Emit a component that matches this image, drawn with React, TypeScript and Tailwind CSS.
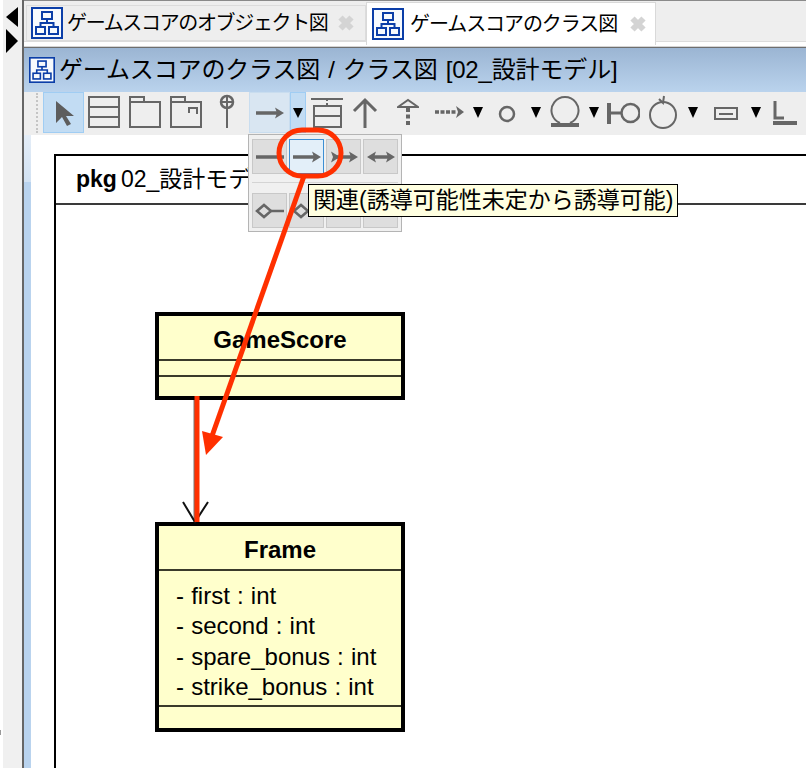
const JP = "font-['Liberation_Sans','Noto_Sans_CJK_JP',sans-serif]";

function DiagramIcon({ size }: { size: number }) {
  return (
    <svg width={size} height={size} viewBox="0 0 32 32" className="shrink-0">
      <rect x="1" y="1" width="30" height="30" fill="#f7fafd" stroke="#0b3ea8" strokeWidth="2" />
      <g fill="none" stroke="#0b3ea8" strokeWidth="2">
        <rect x="11" y="5" width="10" height="7" />
        <rect x="5" y="20" width="9" height="7" />
        <rect x="18" y="20" width="9" height="7" />
        <path d="M16 12v4M9.5 20v-4h13v4" />
      </g>
    </svg>
  );
}

function Tab({ label, active, width }: { label: string; active?: boolean; width: string }) {
  return (
    <div
      className={`flex items-center ${width} ${
        active
          ? "h-[43px] bg-white border border-b-0 border-[#d9d9d9] pl-[5px]"
          : "h-[36px] mt-[3px] bg-[#eeeeee] border border-[#dcdcdc] pl-[4px]"
      }`}
    >
      <DiagramIcon size={32} />
      <span
        className={`text-[20px] leading-none text-black whitespace-nowrap ${JP} ${
          active ? "ml-[6px] tracking-[-1.08px]" : "ml-[4px] tracking-[-1.35px]"
        }`}
      >
        {label}
      </span>
      <svg width="18" height="18" viewBox="0 0 18 18" className={`shrink-0 ${active ? "ml-[12px]" : "ml-[9px]"}`}>
        <path d="M3.5 3.5l11 11M14.5 3.5l-11 11" stroke="#d4d4d4" strokeWidth="6" />
      </svg>
    </div>
  );
}

const S = "#666666";

function TI({ w, ml, children }: { w: number; ml: number; children: React.ReactNode }) {
  return (
    <svg width={w} height="42" viewBox={`0 0 ${w} 42`} className="shrink-0" style={{ marginLeft: ml }}>
      {children}
    </svg>
  );
}

function Drop({ ml }: { ml: number }) {
  return (
    <svg width="12" height="42" viewBox="0 0 12 42" className="shrink-0" style={{ marginLeft: ml }}>
      <path d="M1 15h10l-5 11z" fill="#000" />
    </svg>
  );
}

function Arrow() {
  return (
    <>
      <path d="M1 8h21" stroke={S} strokeWidth="3.5" />
      <path d="M20 2.5l9 5.5-9 5.5 2-5.5z" fill={S} />
    </>
  );
}

function Toolbar() {
  return (
    <div className="flex h-[43px] bg-[#eeeeee] items-start pl-[5px]">
      <div className="w-[2px] h-[40px] mt-[1px] border-l-2 border-dotted border-[#c4c4c4]" />
      <div className="ml-[5px] w-[41px] h-[41px] bg-[#c2dcf3] border border-[#a0cdf3] flex items-center justify-center">
        <svg width="24" height="30" viewBox="0 0 24 30">
          <path d="M4 3v22l6-6 5 9 4-2-5-8h8z" fill="#5d5d5d" />
        </svg>
      </div>
      <TI w={32} ml={4}>
        <rect x="1" y="5" width="30" height="30" fill="none" stroke={S} strokeWidth="2" />
        <path d="M1 15h30M1 25h30" stroke={S} strokeWidth="2" />
      </TI>
      <TI w={32} ml={9}>
        <path d="M1 35V10h30v25zM1 10V5h14v5" fill="none" stroke={S} strokeWidth="2" />
      </TI>
      <TI w={32} ml={9}>
        <path d="M1 35V10h30v25zM1 10V5h14v5M19 21v-5h8v6" fill="none" stroke={S} strokeWidth="2" />
      </TI>
      <TI w={18} ml={16}>
        <circle cx="9" cy="10" r="6" fill="none" stroke={S} strokeWidth="2.5" />
        <path d="M9 4v32M3 10h12" stroke={S} strokeWidth="2" />
      </TI>
      <div className="ml-[13px] w-[41px] h-[41px] bg-[#d9e6f2] border border-[#c9ddef] flex items-center justify-center">
        <svg width="30" height="16" viewBox="0 0 30 16"><Arrow /></svg>
      </div>
      <div className="w-[16px] h-[41px] bg-[#c2dcf3] border border-[#a0cdf3] flex items-center justify-center">
        <svg width="12" height="10" viewBox="0 0 12 10"><path d="M1 0h10L6 10z" fill="#000" /></svg>
      </div>
      <TI w={34} ml={5}>
        <path d="M0 7h32" stroke={S} strokeWidth="2" />
        <path d="M16 7v7" stroke={S} strokeWidth="2" strokeDasharray="2 2" />
        <rect x="3" y="14" width="27" height="21" fill="none" stroke={S} strokeWidth="2" />
        <path d="M3 24h27" stroke={S} strokeWidth="2" />
      </TI>
      <TI w={26} ml={7}>
        <path d="M2 19L13 8l11 11M13 9v27" fill="none" stroke={S} strokeWidth="3" />
      </TI>
      <TI w={22} ml={19}>
        <path d="M1 15L11 8l10 7z" fill="none" stroke={S} strokeWidth="2" />
        <path d="M11 16v19" stroke={S} strokeWidth="4" strokeDasharray="4 2.5" />
      </TI>
      <TI w={30} ml={16}>
        <path d="M0 20h22" stroke={S} strokeWidth="3.5" strokeDasharray="4 1.5" />
        <path d="M21 14l8 6-8 6 2-6z" fill={S} />
      </TI>
      <Drop ml={7} />
      <TI w={18} ml={14}>
        <circle cx="9" cy="22" r="7" fill="none" stroke={S} strokeWidth="2.5" />
      </TI>
      <Drop ml={14} />
      <TI w={30} ml={8}>
        <path d="M10 31a13.5 13.5 0 1 1 10 0" fill="none" stroke={S} strokeWidth="2" />
        <path d="M1 33h28" stroke={S} strokeWidth="4" />
      </TI>
      <Drop ml={8} />
      <TI w={34} ml={6}>
        <path d="M3 11v21" stroke={S} strokeWidth="4" />
        <path d="M3 21h13" stroke={S} strokeWidth="3" />
        <circle cx="24.5" cy="21" r="9" fill="none" stroke={S} strokeWidth="2.5" />
      </TI>
      <TI w={30} ml={8}>
        <circle cx="15" cy="23" r="13" fill="none" stroke={S} strokeWidth="2" />
        <path d="M11 7l4 4 1-7" fill="none" stroke={S} strokeWidth="2" />
      </TI>
      <Drop ml={9} />
      <TI w={24} ml={15}>
        <rect x="1" y="16" width="22" height="11" fill="none" stroke={S} strokeWidth="2" />
        <path d="M5 22h14" stroke={S} strokeWidth="2" />
      </TI>
      <Drop ml={12} />
      <TI w={24} ml={11}>
        <path d="M2 9v17h9" fill="none" stroke={S} strokeWidth="3" />
        <path d="M0 31h24" stroke={S} strokeWidth="4" />
      </TI>
    </div>
  );
}

function PopBtn({ active, children }: { active?: boolean; children: React.ReactNode }) {
  return (
    <div
      className={`w-[35px] h-[35px] border flex items-center justify-center ${
        active ? "bg-[#e3eff9] border-[#3d8fd4]" : "bg-[#dedede] border-[#c8c8c8]"
      }`}
    >
      <svg width="30" height="16" viewBox="0 0 30 16">{children}</svg>
    </div>
  );
}

function Popup() {
  return (
    <div className="absolute left-[248px] top-[134px] w-[154px] h-[98px] bg-[#f0f0f0] border border-[#b4b4b4] px-[3px] pt-[4px]">
      <div className="flex gap-[2px]">
        <PopBtn><path d="M1 8h28" stroke={S} strokeWidth="3.5" /></PopBtn>
        <PopBtn active><Arrow /></PopBtn>
        <PopBtn>
          <path d="M6 8h18" stroke={S} strokeWidth="3.5" />
          <path d="M2 2.5l9 5.5-9 5.5 2-5.5zM20 2.5l9 5.5-9 5.5 2-5.5z" fill={S} />
        </PopBtn>
        <PopBtn>
          <path d="M5 8h20" stroke={S} strokeWidth="3.5" />
          <path d="M10 2.5L1 8l9 5.5-2-5.5zM20 2.5l9 5.5-9 5.5 2-5.5z" fill={S} />
        </PopBtn>
      </div>
      <div className="h-px bg-[#d4d4d4] mt-[8px] mb-[10px]" />
      <div className="flex gap-[2px]">
        <PopBtn>
          <path d="M2 8l7-6 7 6-7 6z" fill="none" stroke={S} strokeWidth="2.5" />
          <path d="M16 8h13" stroke={S} strokeWidth="2.5" />
        </PopBtn>
        <PopBtn>
          <path d="M2 8l7-6 7 6-7 6z" fill="none" stroke={S} strokeWidth="2.5" />
        </PopBtn>
        <div className="w-[35px] h-[35px] bg-[#dedede] border border-[#c8c8c8]" />
        <div className="w-[35px] h-[35px] bg-[#dedede] border border-[#c8c8c8]" />
      </div>
    </div>
  );
}

function ClassBox({ name, attrs, className }: { name: string; attrs: string[]; className: string }) {
  return (
    <div className={`absolute left-[155px] w-[250px] bg-[#ffffcc] border-[4px] border-black font-['Liberation_Sans',sans-serif] text-black ${className}`}>
      <div className="h-[45px] flex items-center justify-center font-bold text-[24px] pt-[5px] border-b-2 border-[#3a3a2a]">{name}</div>
      <div className={`border-b-2 border-[#3a3a2a] ${attrs.length ? "h-[136px] pt-[10px] pl-[17px]" : "h-[16px]"}`}>
        {attrs.map((a) => (
          <div key={a} className="h-[30.4px] text-[24px] leading-[30px] whitespace-nowrap [word-spacing:0.5px]">- {a}</div>
        ))}
      </div>
    </div>
  );
}

export default function App() {
  return (
    <div className={`relative w-[806px] h-[768px] overflow-hidden bg-white flex ${JP}`}>
      <div className="w-[3px] bg-white relative">
        <div className="absolute left-0 top-[730px] w-px h-[5px] bg-[#999999]" />
      </div>
      <div className="w-[19px] bg-[#f0f0f0] flex flex-col pl-[3px] pt-[7px] gap-[2px]">
        <svg width="12" height="20" viewBox="0 0 12 20"><path d="M12 0v20L0 10z" fill="#000" /></svg>
        <svg width="12" height="24" viewBox="0 0 12 24"><path d="M0 0v24l12-12z" fill="#000" /></svg>
      </div>
      <div className="w-[2px] bg-[#666666]" />
      <div className="flex-1 flex flex-col min-w-0">
        <div className="h-[48px] bg-white border-t border-[#8a8a8a] border-b border-b-[#6e6e6e]">
          <div className="h-[41px] bg-[#eeeeee] border-b border-[#dcdcdc] flex items-start pl-[2px] pt-px">
            <Tab label="ゲームスコアのオブジェクト図" width="w-[340px]" />
            <Tab label="ゲームスコアのクラス図" active width="w-[290px]" />
          </div>
          <div className="h-[4px]" />
          <div className="h-px bg-[#d4d4d4]" />
        </div>
        <div className="h-[44px] bg-gradient-to-b from-[#9bb5d3] to-[#bad3ed] flex items-center pl-[5px]">
          <DiagramIcon size={26} />
          <span className="ml-[4px] text-[24px] leading-none tracking-[-0.15px] [word-spacing:1.5px] text-black whitespace-nowrap">
            ゲームスコアのクラス図 / クラス図 [02_設計モデル]
          </span>
        </div>
        <div className="flex flex-1 min-h-0">
          <div className="w-[7px] flex flex-col">
            <div className="h-[43px] bg-[#eeeeee]" />
            <div className="h-[47px] bg-gradient-to-b from-[#e4edf7] to-[#d2e2f3]" />
            <div className="flex-1 bg-[#b9d3ee]" />
          </div>
          <div className="flex-1 min-w-0 flex flex-col">
            <Toolbar />
            <div className="flex-1 bg-white" />
          </div>
        </div>
      </div>

      <div className="absolute left-[54px] top-[154px] w-[760px] h-[630px] border-2 border-black bg-white">
        <div className="h-[49px] border-b-2 border-[#3a3a3a] pl-[20px] flex items-center text-[23px] text-black whitespace-nowrap">
          <b className="mr-[4px]">pkg</b>02_設計モデル
        </div>
      </div>

      <ClassBox name="GameScore" attrs={[]} className="top-[312px] h-[88px]" />
      <ClassBox name="Frame" attrs={["first : int", "second : int", "spare_bonus : int", "strike_bonus : int"]} className="top-[522px] h-[210px]" />

      <Popup />
      <div className="absolute left-[308px] top-[184px] w-[370px] h-[33px] bg-[#ffffe1] border border-black pl-[4px] flex items-center text-[23px] leading-none text-black whitespace-nowrap">
        関連(誘導可能性未定から誘導可能)
      </div>

      <svg className="absolute left-0 top-0 pointer-events-none" width="806" height="768" viewBox="0 0 806 768">
        <path d="M194.5 400v122" stroke="#777777" strokeWidth="2" />
        <path d="M183 502l12 20 13-20" fill="none" stroke="#111111" strokeWidth="2" />
        <path d="M197 396v126" stroke="#ff3000" strokeWidth="5" />
        <rect x="279" y="130" width="62" height="46" rx="23" fill="none" stroke="#ff3000" strokeWidth="5" />
        <path d="M304 176L212 436" stroke="#ff3000" strokeWidth="5" />
        <path d="M202 431l21 6-17 18z" fill="#ff3000" />
      </svg>
    </div>
  );
}
